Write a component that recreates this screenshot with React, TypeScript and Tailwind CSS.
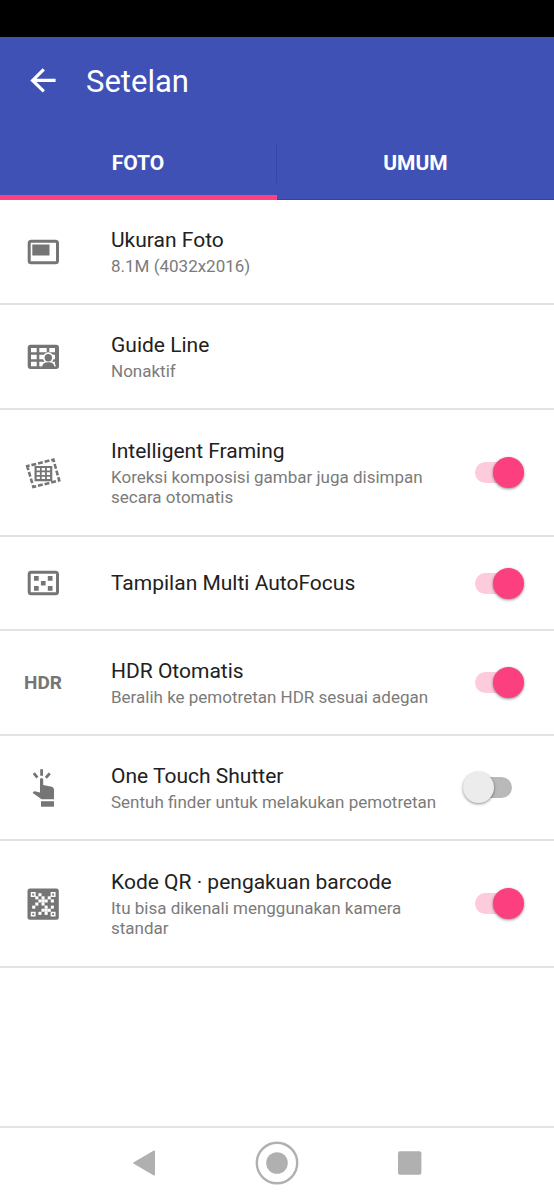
import React, { useState } from "react";

function Frame() {
  return <rect x="6.2" y="9.2" width="28.3" height="21.6" rx="2" fill="none" stroke="currentColor" strokeWidth="3" />;
}

function PhotoSizeIcon() {
  return (
    <svg viewBox="0 0 40 40" className="size-10" fill="currentColor" aria-hidden="true">
      <Frame />
      <rect x="9.3" y="12.5" width="17.2" height="11" />
    </svg>
  );
}

function GuideLineIcon() {
  return (
    <svg viewBox="0 0 40 40" className="size-10" fill="currentColor" aria-hidden="true">
      <rect x="4.7" y="7.7" width="31.3" height="24.4" rx="3" />
      <g fill="#fff">
        <path d="M8 11h5.7v4.3H8zM16.3 11h7.4v4.3h-7.4zM26.3 11H32v4.3h-5.7z" />
        <path d="M8 17.8h5.7v4.4H8zM16.3 17.8h7.4v4.4h-7.4zM26.3 17.8H32v4.4h-5.7z" />
        <path d="M8 24.8h5.7v4.4H8zM16.3 24.8h7.4v4.4h-7.4zM26.3 24.8H32v4.4h-5.7z" />
        <circle cx="25.3" cy="20.7" r="5.4" />
      </g>
      <path d="M18.4 30.6c0-4 3-6 6.9-6s6.9 2 6.9 6" stroke="#fff" strokeWidth="1.4" />
      <path d="M18 29.4h15v2.2H18z" />
      <circle cx="25.3" cy="20.7" r="3.7" />
    </svg>
  );
}

function FramingIcon() {
  return (
    <svg viewBox="0 0 40 40" className="size-10" fill="none" stroke="currentColor" aria-hidden="true">
      <path d="M4.2 13.2 30.4 6.6 36.2 27.4 10.4 34Z" strokeWidth="2.6" strokeDasharray="4.9 1.9" strokeDashoffset="2.4" />
      <path d="M12.6 14h15.6v13.2H12.6z" strokeWidth="2.2" />
      <path d="M17.8 14v13.2M23 14v13.2M12.6 18.4h15.6M12.6 22.8h15.6" strokeWidth="1.8" />
    </svg>
  );
}

function AutoFocusIcon() {
  return (
    <svg viewBox="0 0 40 40" className="size-10" fill="currentColor" aria-hidden="true">
      <Frame />
      <path d="M11 13h4.7v4.7H11zM24.8 13h4.7v4.7h-4.7zM17.9 17.9h4.7v4.7h-4.7zM11 23h4.7v4.7H11zM24.8 23h4.7v4.7h-4.7z" />
    </svg>
  );
}

function HdrIcon() {
  return <span className="text-[19px] leading-6 font-bold">HDR</span>;
}

function TouchIcon() {
  return (
    <svg viewBox="0 0 40 40" className="size-10" fill="currentColor" aria-hidden="true">
      <path d="M18.6 1.3v6.4M10.8 5.2l3.6 4.4M26.8 5.4l-3.9 4.4" stroke="currentColor" strokeWidth="2.8" />
      <path d="M17 11.6a1.6 1.6 0 0 1 3.2 0v5.5l8.6 1.7c1.4.5 2.2 1.6 2.2 3v9.4H18.6L9.8 25c.2-1.2 1-1.9 2.2-1.8l5 1.4z" />
      <path d="M18 33.2h13v5.5H18z" />
    </svg>
  );
}

// column/row positions of the light modules, on a 7x7 grid
const modules = [
  [2, 0],
  [1, 1], [3, 1], [5, 1],
  [2, 2], [3, 2], [4, 2], [6, 2],
  [1, 3], [3, 3],
  [0, 4], [4, 4], [6, 4],
  [3, 5], [4, 5], [5, 5],
  [2, 6], [4, 6],
];

function QrIcon() {
  return (
    <svg viewBox="0 0 40 40" className="size-10" fill="currentColor" aria-hidden="true">
      <rect x="4.5" y="4.5" width="31.3" height="31.3" rx="2.5" />
      <path d="M8.5 8.8h3.4v3.4H8.5zM28.4 8.8h3.4v3.4h-3.4zM8.5 28.4h3.4v3.4H8.5zM28.4 28.4h3.4v3.4h-3.4z" stroke="#fff" strokeWidth="1.5" />
      {modules.map(([col, row]) => (
        <rect key={`${col}-${row}`} x={9.2 + col * 3.1} y={9.2 + row * 3.1} width="3.1" height="3.1" fill="#fff" />
      ))}
    </svg>
  );
}

const settings = [
  { id: "size", icon: <PhotoSizeIcon />, title: "Ukuran Foto", summary: "8.1M (4032x2016)", height: "min-h-[105px]" },
  { id: "guide", icon: <GuideLineIcon />, title: "Guide Line", summary: "Nonaktif", height: "min-h-[105px]" },
  {
    id: "framing",
    icon: <FramingIcon />,
    title: "Intelligent Framing",
    summary: "Koreksi komposisi gambar juga disimpan secara otomatis",
    height: "min-h-[127px]",
    checked: true,
  },
  { id: "autofocus", icon: <AutoFocusIcon />, title: "Tampilan Multi AutoFocus", height: "min-h-[94px]", checked: true },
  {
    id: "hdr",
    icon: <HdrIcon />,
    title: "HDR Otomatis",
    summary: "Beralih ke pemotretan HDR sesuai adegan",
    height: "min-h-[105px]",
    checked: true,
  },
  {
    id: "touch",
    icon: <TouchIcon />,
    title: "One Touch Shutter",
    summary: "Sentuh finder untuk melakukan pemotretan",
    height: "min-h-[105px]",
    checked: false,
  },
  {
    id: "qr",
    icon: <QrIcon />,
    title: "Kode QR · pengakuan barcode",
    summary: "Itu bisa dikenali menggunakan kamera standar",
    height: "min-h-[127px]",
    checked: true,
  },
];

type Setting = (typeof settings)[number];

function RowText({ item }: { item: Setting }) {
  return (
    <>
      <span className="flex w-[86px] shrink-0 justify-center text-[#757575]">{item.icon}</span>
      <span className="ml-[25px] min-w-0 flex-1">
        <span className="block text-[21px] leading-7 text-[#212121]">{item.title}</span>
        {item.summary && <span className="block py-0.5 text-[17px] leading-5 text-[#7b7b7b]">{item.summary}</span>}
      </span>
    </>
  );
}

function SettingRow({ item }: { item: Setting }) {
  const [on, setOn] = useState(!!item.checked);

  return (
    <li className={`flex border-b-2 border-[#e2e2e2] ${item.height}`}>
      {item.checked === undefined ? (
        <button type="button" className="flex flex-1 items-center text-left">
          <RowText item={item} />
        </button>
      ) : (
        <label htmlFor={item.id} className="flex flex-1 items-center pr-[30px]">
          <RowText item={item} />
          <input
            id={item.id}
            type="checkbox"
            role="switch"
            checked={on}
            onChange={() => setOn(!on)}
            className="relative ml-4 h-[31px] w-[61px] shrink-0 appearance-none before:absolute before:top-[5px] before:left-3 before:h-[21px] before:w-[37px] before:rounded-full before:bg-[#b9b9b9] after:absolute after:top-0 after:left-0 after:size-[31px] after:rounded-full after:bg-[#ececec] after:shadow-[0_1px_3px_rgba(0,0,0,0.45)] checked:before:bg-[#fecbdc] checked:after:left-[30px] checked:after:bg-[#fc407f]"
          />
        </label>
      )}
    </li>
  );
}

export default function App() {
  return (
    <div className="flex min-h-screen flex-col bg-white font-[Roboto,sans-serif]">
      <div className="h-[37px] bg-black" />

      <header className="bg-[#3f51b5] text-white">
        <div className="flex h-[89px] items-center gap-7 pl-7">
          <button type="button" aria-label="Kembali">
            <svg viewBox="0 0 30 30" className="size-[30px]" fill="none" stroke="currentColor" strokeWidth="3.2">
              <path d="M27.6 13.4H5M15.8 2.4 4.6 13.4l11.2 11" />
            </svg>
          </button>
          <h1 className="text-[31px] leading-9">Setelan</h1>
        </div>
        <div role="tablist" className="grid h-[74px] grid-cols-2 text-[21px] leading-6 font-bold">
          <button type="button" role="tab" aria-selected="true" className="flex items-center border-b-[5px] border-[#ff4081] pt-1">
            <span className="flex h-10 w-full items-center justify-center border-r border-[#3547a3]">FOTO</span>
          </button>
          <button type="button" role="tab" aria-selected="false" className="border-b border-[#35459c]">
            UMUM
          </button>
        </div>
      </header>

      <main className="flex-1">
        <ul>
          {settings.map((item) => (
            <SettingRow key={item.id} item={item} />
          ))}
        </ul>
      </main>

      <nav className="grid h-[74px] grid-cols-3 place-items-center border-t-2 border-[#e4e4e4] px-[77px] pb-[3px] text-[#b0b0b0]">
        <button type="button" aria-label="Kembali ke layar sebelumnya">
          <svg viewBox="0 0 44 44" className="size-11" fill="currentColor">
            <path d="M11.8 21.2 31.4 9.8c.8-.5 1.6 0 1.6.9v22.6c0 .9-.8 1.4-1.6.9L11.8 22.8c-.7-.4-.7-1.2 0-1.6z" />
          </svg>
        </button>
        <button type="button" aria-label="Layar utama">
          <svg viewBox="0 0 44 44" className="size-11" fill="currentColor">
            <circle cx="22" cy="22" r="20.2" fill="none" stroke="currentColor" strokeWidth="2.4" />
            <circle cx="22" cy="22" r="10.8" />
          </svg>
        </button>
        <button type="button" aria-label="Aplikasi terbaru">
          <svg viewBox="0 0 44 44" className="size-11" fill="currentColor">
            <rect x="10" y="10.3" width="23.4" height="23.4" rx="2" />
          </svg>
        </button>
      </nav>
    </div>
  );
}
